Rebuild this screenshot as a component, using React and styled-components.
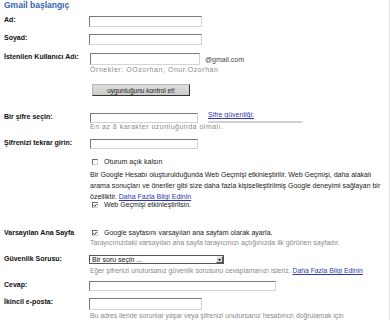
import React from 'react';
import styled, { createGlobalStyle } from 'styled-components';

const Global = createGlobalStyle`
  html, body { margin: 0; padding: 0; background: #fff; }
  body { font-family: "Liberation Sans", Arial, sans-serif; }
`;

const Page = styled.div`
  box-sizing: border-box;
  width: 390px;
  height: 320px;
  overflow: hidden;
  border-right: 1px solid #dde3ea;
  padding-left: 4px;
`;

const Title = styled.h1`
  margin: 0;
  font-size: 8.5px;
  line-height: 11px;
  font-weight: bold;
  color: #3566b0;
`;

const Row = styled.div`
  display: grid;
  grid-template-columns: 85px 1fr;
  margin-top: ${(p) => p.$mt || 0}px;
`;

const Label = styled.div`
  font-size: 7px;
  line-height: 8px;
  font-weight: bold;
  color: #111;
  white-space: nowrap;
`;

const Field = styled.div`
  display: flex;
  flex-direction: column;
  align-items: flex-start;
`;

const Indented = styled.div`
  padding-left: 85px;
  display: flex;
  flex-direction: column;
  align-items: flex-start;
`;

const TextInput = styled.input`
  box-sizing: border-box;
  width: ${(p) => p.$w}px;
  height: ${(p) => p.$h || 11}px;
  margin: 0 0 0 ${(p) => p.$ml || 0}px;
  padding: 0 2px;
  border-style: solid;
  border-width: 1px;
  border-color: #7a7a7a #d4d4d4 #d4d4d4 #7a7a7a;
  background: #fff;
  font: 7px "Liberation Sans", Arial, sans-serif;
  outline: none;
`;

const Hint = styled.div`
  font-size: ${(p) => p.$fs || 7}px;
  letter-spacing: ${(p) => p.$ls || 0}px;
  line-height: 8px;
  color: #8a8a8a;
  white-space: nowrap;
  margin-top: ${(p) => p.$mt || 0}px;
  padding-left: 1px;
`;

const Inline = styled.div`
  display: flex;
  align-items: center;
  gap: 5px;
`;

const Domain = styled.span`
  font-size: 7px;
  color: #444;
`;

const CheckButton = styled.button`
  box-sizing: border-box;
  width: 98px;
  height: 12px;
  margin: 10px 0 0 3px;
  padding: 0;
  background: linear-gradient(#dcdcdc, #cbcbcb);
  border: 1px solid;
  border-color: #b8b8b8 #333 #333 #b8b8b8;
  font: 6.5px "Liberation Sans", Arial, sans-serif;
  color: #222;
`;

const PasswordLine = styled.div`
  display: flex;
  align-items: flex-start;
`;

const Strength = styled.div`
  margin: -2px 0 0 10px;
  display: flex;
  flex-direction: column;
`;

const Link = styled.a`
  color: #3038b0;
  text-decoration: underline;
  font-size: ${(p) => p.$fs || 7}px;
  cursor: pointer;
`;

const StrengthLabel = styled.span`
  font-size: 7px;
  line-height: 8px;
`;

const StrengthBar = styled.div`
  width: 94px;
  height: 2px;
  margin-top: 2px;
  background: #d2d2d2;
`;

const CheckLine = styled.label`
  display: flex;
  align-items: center;
  gap: 6px;
  padding-left: 3px;
  font-size: 7px;
  line-height: ${(p) => p.$lh || 8}px;
  color: #222;
  white-space: nowrap;
  margin-top: ${(p) => p.$mt || 0}px;
`;

const Box = styled.span`
  box-sizing: border-box;
  width: 6px;
  height: 6px;
  border: 1px solid;
  border-color: #6a6a6a #cfcfcf #cfcfcf #6a6a6a;
  background: #fff;
  display: flex;
  align-items: center;
  justify-content: center;
`;

const Paragraph = styled.p`
  margin: 3px 0 0;
  padding-left: 1px;
  font-size: 7px;
  line-height: 11px;
  color: #222;
  white-space: nowrap;
`;

const SelectBox = styled.div`
  box-sizing: border-box;
  width: 135px;
  height: 9px;
  display: flex;
  align-items: stretch;
  border: 1px solid #555;
  background: #fff;
`;

const SelectText = styled.span`
  flex: 1;
  font-size: 7px;
  line-height: 7px;
  padding-left: 2px;
  color: #111;
`;

const SelectArrow = styled.span`
  box-sizing: border-box;
  width: 7px;
  border: 1px solid;
  border-color: #f0f0f0 #555 #555 #f0f0f0;
  background: #d6d6d6;
  display: flex;
  align-items: center;
  justify-content: center;
`;

function Check({ checked }) {
  return (
    <Box>
      {checked && (
        <svg width="5" height="5" viewBox="0 0 5 5">
          <path d="M0.6 2.4 L2 3.8 L4.4 0.8" fill="none" stroke="#111" strokeWidth="1.1" />
        </svg>
      )}
    </Box>
  );
}

export default function App() {
  return (
    <>
      <Global />
      <Page>
        <Title>Gmail başlangıç</Title>

        <Row $mt={5}>
          <Label>Ad:</Label>
          <Field>
            <TextInput $w={113} $h={11} />
          </Field>
        </Row>

        <Row $mt={7}>
          <Label>Soyad:</Label>
          <Field>
            <TextInput $w={113} $h={11} />
          </Field>
        </Row>

        <Row $mt={8}>
          <Label>İstenilen Kullanıcı Adı:</Label>
          <Field>
            <Inline>
              <TextInput $w={110} $h={12} $ml={1} />
              <Domain>@gmail.com</Domain>
            </Inline>
            <Hint $mt={1} $ls={0.55}>Örnekler: OOzorhan, Onur.Ozorhan</Hint>
            <CheckButton type="button">uygunluğunu kontrol et!</CheckButton>
          </Field>
        </Row>

        <Row $mt={17}>
          <Label>Bir şifre seçin:</Label>
          <Field>
            <PasswordLine>
              <TextInput type="password" $w={108} $h={10} $ml={1} />
              <Strength>
                <StrengthLabel>
                  <Link>Şifre güvenliği:</Link>
                </StrengthLabel>
                <StrengthBar />
              </Strength>
            </PasswordLine>
            <Hint $ls={0.5}>En az 8 karakter uzunluğunda olmalı.</Hint>
          </Field>
        </Row>

        <Row $mt={8}>
          <Label>Şifrenizi tekrar girin:</Label>
          <Field>
            <TextInput type="password" $w={108} $h={10} $ml={1} />
          </Field>
        </Row>

        <Indented>
          <CheckLine $mt={8} $lh={9}>
            <Check />
            Oturum açık kalsın
          </CheckLine>
          <Paragraph>
            Bir Google Hesabı oluşturulduğunda Web Geçmişi etkinleştirilir. Web Geçmişi, daha alakalı
            <br />
            arama sonuçları ve öneriler gibi size daha fazla kişiselleştirilmiş Google deneyimi sağlayan bir
            <br />
            özelliktir. <Link>Daha Fazla Bilgi Edinin</Link>
          </Paragraph>
          <CheckLine $mt={-1}>
            <Check checked />
            Web Geçmişi etkinleştirilsin.
          </CheckLine>
        </Indented>

        <Row $mt={20}>
          <Label>Varsayılan Ana Sayfa</Label>
          <Field>
            <CheckLine>
              <Check checked />
              Google sayfasını varsayılan ana sayfam olarak ayarla.
            </CheckLine>
            <Hint $mt={2}>
              Tarayıcınızdaki varsayılan ana sayfa tarayıcınızı açtığınızda ilk görünen sayfadır.
            </Hint>
          </Field>
        </Row>

        <Row $mt={8}>
          <Label>Güvenlik Sorusu:</Label>
          <Field>
            <SelectBox>
              <SelectText>Bir soru seçin ...</SelectText>
              <SelectArrow>
                <svg width="3" height="2" viewBox="0 0 3 2">
                  <path d="M0 0 L3 0 L1.5 2 Z" fill="#111" />
                </svg>
              </SelectArrow>
            </SelectBox>
            <Hint $mt={3} $fs={6.8}>
              Eğer şifrenizi unutursanız güvenlik sorusunu cevaplamanızı isteriz.{' '}
              <Link $fs={6.8}>Daha Fazla Bilgi Edinin</Link>
            </Hint>
          </Field>
        </Row>

        <Row $mt={6}>
          <Label>Cevap:</Label>
          <Field>
            <TextInput $w={187} $h={10} />
          </Field>
        </Row>

        <Row $mt={7}>
          <Label>İkincil e-posta:</Label>
          <Field>
            <TextInput $w={113} $h={12} />
            <Hint $mt={2} $fs={6.8}>
              Bu adres ileride sorunlar yaşar veya şifrenizi unutursanız hesabınızı doğrulamak için
            </Hint>
          </Field>
        </Row>
      </Page>
    </>
  );
}
